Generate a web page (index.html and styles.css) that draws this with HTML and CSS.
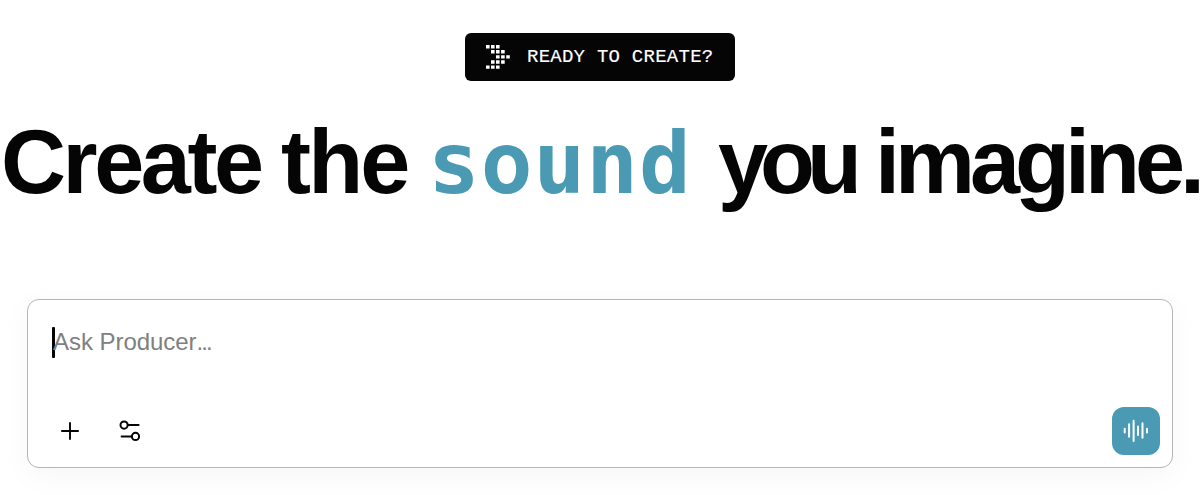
FILE: index.html
```html
<!DOCTYPE html>
<html lang="en">
<head>
<meta charset="utf-8">
<title>Producer</title>
<link rel="stylesheet" href="styles.css">
</head>
<body>
<main class="hero">
  <div class="badge">
    <svg class="badge-icon" width="25" height="25" viewBox="0 0 25 25" fill="#fff">
      <path d="M0 0h3.6v3.4H0zM5 0h3.6v3.4H5zM10 0h3.6v3.4H10zM5 5.1h3.6v3.4H5zM10 5.1h3.6v3.4H10zM15.1 5.1h3.6v3.4h-3.6zM10 10.2h3.6v3.4H10zM15.1 10.2h3.6v3.4h-3.6zM20.2 10.2h3.6v3.4h-3.6zM5 15.3h3.6v3.4H5zM10 15.3h3.6v3.4H10zM15.1 15.3h3.6v3.4h-3.6zM0 20.4h3.6v3.4H0zM5 20.4h3.6v3.4H5zM10 20.4h3.6v3.4H10z"/>
    </svg>
    <span class="badge-text">READY TO CREATE?</span>
  </div>
  <h1 class="headline"><span class="word create">Create</span> <span class="word the">the</span> <span class="word sound">sound</span> <span class="word you">you</span> <span class="word imagine">imagine.</span></h1>
  <section class="composer">
    <div class="prompt"><span class="caret"></span><span class="placeholder">Ask Producer<span class="dots">...</span></span></div>
    <div class="toolbar">
      <div class="tools">
        <svg width="24" height="24" viewBox="0 0 24 24" fill="none" stroke="#050505" stroke-width="1.9"><path d="M12 3.2v17.6M3.2 12h17.6"/></svg>
        <svg width="24" height="24" viewBox="0 0 24 24" fill="none" stroke="#050505" stroke-width="2" stroke-linecap="round"><circle cx="6.1" cy="6.1" r="3.6"/><path d="M9.8 6.1h10.8M3.6 17.4h10.2"/><circle cx="17.5" cy="17.4" r="3.6"/></svg>
      </div>
      <button class="voice" aria-label="Voice">
        <svg width="26" height="26" viewBox="0 0 26 26" fill="none" stroke="#fff" stroke-width="2" stroke-linecap="round"><path d="M1.7 10.7v3.8M6.1 6.3v12.4M10.6 2.8v20.2M15 8.5v8.4M19.5 5.3v14.4M24 10.7v3.8"/></svg>
      </button>
    </div>
  </section>
</main>
</body>
</html>
```

FILE: styles.css
```css
* { box-sizing: border-box; }
body {
  margin: 0;
  background: #fff;
  color: #050505;
  font-family: "Liberation Sans", Arial, sans-serif;
  overflow: hidden;
}
.hero {
  display: flex;
  flex-direction: column;
  align-items: center;
  height: 495px;
  padding-top: 33px;
}
.badge {
  display: flex;
  align-items: center;
  flex: none;
  width: 270px;
  height: 48px;
  padding-left: 21px;
  gap: 16px;
  border-radius: 6px;
  background: #050505;
  color: #fff;
}
.badge-text {
  font: 400 19px/24px "Liberation Mono", monospace;
  letter-spacing: 0.25px;
  -webkit-text-stroke: 0.15px #fff;
  white-space: pre;
}
.headline {
  display: flex;
  align-items: baseline;
  align-self: flex-start;
  flex: none;
  height: 88px;
  margin: 37px 0 0;
  padding-left: 1px;
  font-size: 90px;
  line-height: 88px;
  font-weight: 700;
  white-space: nowrap;
}
.word { flex: none; }
.create { width: 280px; letter-spacing: -3.4px; }
.the { width: 147px; letter-spacing: -2.8px; }
.sound {
  width: 290px;
  font-family: "DejaVu Sans Mono", monospace;
  font-size: 86px;
  letter-spacing: 1px;
  color: #4a9ab4;
}
.you { width: 157px; letter-spacing: -8px; }
.imagine { width: 324px; letter-spacing: -5px; }
.composer {
  display: flex;
  flex-direction: column;
  justify-content: space-between;
  flex: none;
  width: 1146px;
  height: 169px;
  margin-top: 93px;
  padding: 26px 12px 12px 24px;
  border: 1px solid #b5b5b5;
  border-radius: 12px;
  background: #fff;
  box-shadow: 0 8px 32px rgba(0, 0, 0, 0.04);
}
.prompt { display: flex; align-items: center; height: 32px; }
.caret { width: 3px; height: 31px; border-radius: 1px; background: #050505; }
.placeholder {
  margin-left: -2px;
  font-size: 24px;
  line-height: 32px;
  letter-spacing: -0.05px;
  color: #808080;
}
.dots { letter-spacing: -1.9px; }
.toolbar { display: flex; align-items: center; justify-content: space-between; }
.tools { display: flex; gap: 36px; padding-left: 6px; }
.tools svg { display: block; }
.voice {
  display: grid;
  place-items: center;
  width: 48px;
  height: 48px;
  padding: 0;
  border: 0;
  border-radius: 12px;
  background: #4a9ab4;
}
```
